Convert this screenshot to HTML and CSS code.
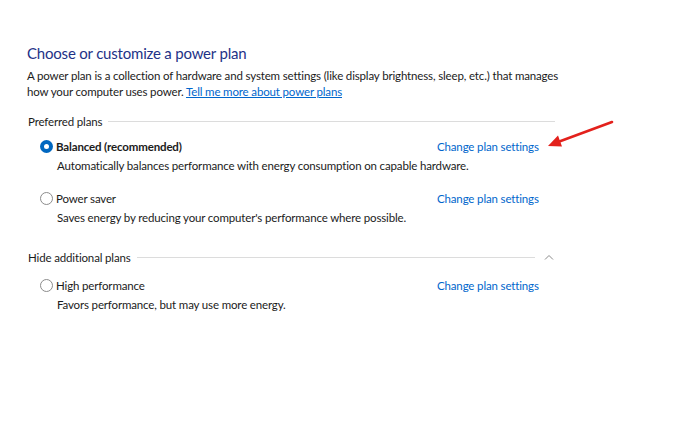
FILE: index.html
```html
<!DOCTYPE html>
<html lang="en">
<head>
    <meta charset="UTF-8">
    <title>Power Options</title>
    <link rel="stylesheet" href="styles.css">
</head>
<body>
    <div class="page">
        <h1 class="title">Choose or customize a power plan</h1>
        <p class="intro">
            A power plan is a collection of hardware and system settings (like display brightness, sleep, etc.) that manages<br>
            how your computer uses power. <a href="#">Tell me more about power plans</a>
        </p>

        <div class="group">
            <div class="group-head">
                <span class="group-label">Preferred plans</span>
                <span class="rule"></span>
            </div>

            <div class="plan">
                <div class="plan-row">
                    <span class="radio checked"></span>
                    <span class="plan-name bold">Balanced (recommended)</span>
                    <a href="#" class="plan-link">Change plan settings</a>
                </div>
                <div class="plan-desc">Automatically balances performance with energy consumption on capable hardware.</div>
            </div>

            <div class="plan">
                <div class="plan-row">
                    <span class="radio"></span>
                    <span class="plan-name">Power saver</span>
                    <a href="#" class="plan-link">Change plan settings</a>
                </div>
                <div class="plan-desc">Saves energy by reducing your computer's performance where possible.</div>
            </div>
        </div>

        <div class="group extra">
            <div class="group-head">
                <span class="group-label">Hide additional plans</span>
                <span class="rule"></span>
                <svg class="chevron" width="10" height="6" viewBox="0 0 10 6">
                    <path d="M1 5.5 L5 1.5 L9 5.5" fill="none" stroke="#8a8a8a" stroke-width="1"/>
                </svg>
            </div>

            <div class="plan">
                <div class="plan-row">
                    <span class="radio"></span>
                    <span class="plan-name">High performance</span>
                    <a href="#" class="plan-link">Change plan settings</a>
                </div>
                <div class="plan-desc">Favors performance, but may use more energy.</div>
            </div>
        </div>
    </div>

    <!-- annotation arrow -->
    <svg class="arrow" width="70" height="34" viewBox="0 0 70 34">
        <line x1="66" y1="3" x2="12" y2="23" stroke="#e3211c" stroke-width="2.6" stroke-linecap="round"/>
        <path d="M2 27 L12 16.5 L16 27.5 Z" fill="#e3211c"/>
    </svg>
</body>
</html>
```

FILE: styles.css
```css
:root {
    --title-color: #1e3287;
    --text-color: #1b1b1b;
    --link-color: #0066cc;
    --rule-color: #dcdcdc;
}

* {
    margin: 0;
    padding: 0;
    box-sizing: border-box;
}

body {
    font-family: Lato, "Noto Sans", sans-serif;
    font-size: 11.5px;
    letter-spacing: -0.15px;
    color: var(--text-color);
    background: #fff;
    width: 700px;
    height: 430px;
    position: relative;
    overflow: hidden;
}

a {
    color: var(--link-color);
    text-decoration: none;
}

.page {
    padding: 43px 0 0 27px;
    width: 600px;
}

.title {
    font-size: 15px;
    font-weight: 400;
    letter-spacing: -0.2px;
    line-height: 20px;
    color: var(--title-color);
    margin-bottom: 5px;
}

.intro {
    line-height: 16px;
    margin-bottom: 13px;
    white-space: nowrap;
}

.intro a {
    text-decoration: underline;
}

.group-head {
    display: flex;
    align-items: center;
    gap: 6px;
    height: 16px;
    padding-left: 1px;
    width: 528px;
}

.group-label {
    white-space: nowrap;
}

.rule {
    flex: 1;
    height: 1px;
    background: var(--rule-color);
}

.chevron {
    flex-shrink: 0;
    margin: 0 1px 0 3px;
}

.group {
    margin-bottom: 23px;
}

.group-head + .plan {
    margin-top: 9px;
}

.extra .group-head + .plan {
    margin-top: 12px;
}

.plan {
    padding-left: 13px;
    margin-bottom: 16px;
}

.plan-row {
    display: flex;
    align-items: center;
    height: 16px;
}

.radio {
    width: 13px;
    height: 13px;
    border-radius: 50%;
    border: 1px solid #8c8c8c;
    margin-right: 3px;
    flex-shrink: 0;
}

.radio.checked {
    border: none;
    background: #0067c0;
    position: relative;
}

.radio.checked::after {
    content: "";
    position: absolute;
    left: 4px;
    top: 4px;
    width: 5px;
    height: 5px;
    border-radius: 50%;
    background: #fff;
}

.plan-name {
    width: 381px;
}

.bold {
    font-weight: 700;
}

.plan-desc {
    padding-left: 17px;
    margin-top: 4px;
    line-height: 16px;
}

.arrow {
    position: absolute;
    left: 546px;
    top: 119px;
}
```
